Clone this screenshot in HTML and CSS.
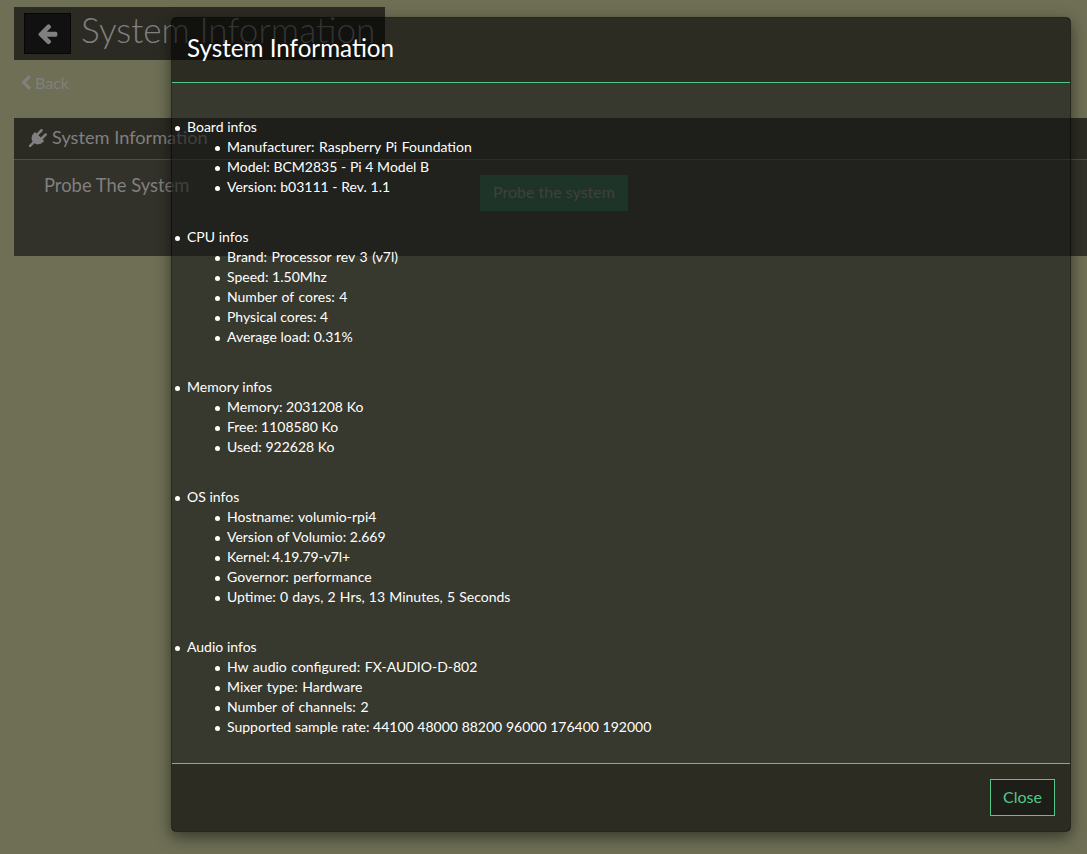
FILE: index.html
```html
<!DOCTYPE html>
<html lang="en">
<head>
<meta charset="utf-8">
<title>System Information</title>
<link rel="stylesheet" href="styles.css">
</head>
<body>
<main class="page">
  <header class="page-header">
    <button class="back-button" aria-label="Back">
      <svg class="arrow-icon" viewBox="0 0 1792 1792"><path fill="currentColor" d="M1664 896v128q0 53-32.5 90.5t-84.5 37.5h-704l293 294q38 36 38 90t-38 90l-75 76q-37 37-90 37-52 0-91-37l-651-652q-37-37-37-90 0-52 37-91l651-650q38-38 91-38 52 0 90 38l75 74q38 38 38 91t-38 91l-293 293h704q52 0 84.500 37.500t32.500 90.500z"/></svg>
    </button>
    <h1 class="page-title">System Information</h1>
  </header>
  <a class="back-link"><svg class="chevron-icon" viewBox="365 0 1081 1792"><path fill="currentColor" d="M1427 301l-531 531 531 531q19 19 19 45t-19 45l-166 166q-19 19-45 19t-45-19l-742-742q-19-19-19-45t19-45l742-742q19-19 45-19t45 19l166 166q19 19 19 45t-19 45z"/></svg><span class="back-text">Back</span></a>
  <section class="panel">
    <h2 class="panel-heading">
      <svg class="plug-icon" viewBox="0 0 1792 1792"><path fill="currentColor" d="M1755 453q37 38 37 90.500t-37 90.500l-401 400 150 150-160 160q-163 163-389.500 186.500t-411.500-100.500l-362 362h-181v-181l362-362q-124-185-100.500-411.500t186.500-389.500l160-160 150 150 400-401q38-37 91-37t90 37 37 90.500-37 90.500l-400 401 234 234 401-400q38-37 91-37t90 37z"/></svg>
      <span class="heading-text">System Information</span>
    </h2>
    <div class="panel-body">
      <span class="setting-label">Probe The System</span>
      <button class="probe-button">Probe the system</button>
    </div>
  </section>
</main>
<div class="modal" role="dialog">
  <div class="modal-header"><h3 class="modal-title">System Information</h3></div>
  <div class="modal-body">
    <ul class="info-list">
      <li>Board infos
        <ul><li class="wide">Manufacturer: Raspberry Pi Foundation</li><li>Model: BCM2835 - Pi 4 Model B</li><li>Version: b03111 - Rev. 1.1</li></ul>
      </li>
      <li>CPU infos
        <ul><li class="wide">Brand: Processor rev 3 (v7l)</li><li>Speed: 1.50Mhz</li><li class="wide">Number of cores: 4</li><li>Physical cores: 4</li><li>Average load: 0.31%</li></ul>
      </li>
      <li>Memory infos
        <ul><li>Memory: 2031208 Ko</li><li>Free: 1108580 Ko</li><li>Used: 922628 Ko</li></ul>
      </li>
      <li>OS infos
        <ul><li class="wide">Hostname: volumio-rpi4</li><li>Version of Volumio: 2.669</li><li class="tight">Kernel: 4.19.79-v7l+</li><li class="wide">Governor: performance</li><li class="uptime">Uptime: 0 days, 2 Hrs, 13 Minutes, 5 Seconds</li></ul>
      </li>
      <li>Audio infos
        <ul><li class="wide">Hw audio configured: FX-AUDIO-D-802</li><li class="wide">Mixer type: Hardware</li><li class="wide">Number of channels: 2</li><li>Supported sample rate: 44100 48000 88200 96000 176400 192000</li></ul>
      </li>
    </ul>
  </div>
  <div class="modal-footer"><button class="close-button">Close</button></div>
</div>
</body>
</html>
```

FILE: styles.css
```css
* { box-sizing: border-box; }
body {
  margin: 0;
  height: 854px;
  overflow: hidden;
  position: relative;
  background: #6e6f55;
  color: #808080;
  font-family: Lato, sans-serif;
}
h1, h2, h3, ul { margin: 0; padding: 0; font-weight: 400; }
button { font-family: inherit; font-size: 16px; padding: 0; border: 0; border-radius: 0; }
.page { padding: 7px 0 0 14px; }
.page-header {
  display: flex;
  width: 371px;
  height: 53px;
  padding: 6px 10px;
  gap: 10px;
  background: #2c2b23;
}
.back-button {
  flex: none;
  display: flex;
  align-items: center;
  justify-content: center;
  width: 47px;
  height: 41px;
  border: 1px solid #070707;
  background: #111;
  color: #808080;
}
.arrow-icon { width: 23px; height: 23px; margin-bottom: 1px; }
.page-title { font-size: 35.2px; font-weight: 300; line-height: 32px; white-space: nowrap; }
.back-link {
  display: flex;
  align-items: center;
  gap: 4px;
  height: 20px;
  margin-top: 13px;
  padding-left: 7px;
  font-size: 16px;
}
.back-text { line-height: 18px; padding-bottom: 1px; }
.chevron-icon { width: 10px; height: 16px; }
.panel { height: 138px; margin-top: 25px; background: #32312a; }
.panel-heading {
  display: flex;
  align-items: center;
  gap: 5px;
  height: 42px;
  padding-left: 15px;
  border-bottom: 1px solid #2a6344;
  background: #2c2b23;
  font-size: 18.2px;
}
.heading-text { padding-bottom: 3px; }
.plug-icon { width: 18px; height: 18px; margin-bottom: 2px; }
.panel-body { display: flex; padding: 15px 0 0 30px; }
.setting-label { width: 436px; font-size: 18.4px; line-height: 20px; }
.probe-button { width: 148px; height: 36px; padding-bottom: 3px; background: #2a6344; color: #808080; }
.modal {
  position: absolute;
  left: 171px;
  top: 17px;
  width: 900px;
  height: 815px;
  display: flex;
  flex-direction: column;
  border: 1px solid rgba(0, 0, 0, .65);
  border-radius: 5px;
  box-shadow: 0 5px 15px rgba(0, 0, 0, .5);
  color: #fff;
}
.modal-header {
  flex: none;
  height: 65px;
  padding: 17px 15px;
  border-bottom: 1px solid #54c688;
  border-radius: 2px 2px 0 0;
  background: rgba(0, 0, 0, .6);
  background-clip: padding-box;
}
.modal-title { font-size: 24.2px; line-height: 26px; }
.modal-body {
  flex: 1;
  min-height: 0;
  padding: 34px 15px 0;
  background: rgba(23, 24, 22, .62);
  font-size: 14px;
  line-height: 20px;
  word-spacing: .1px;
}
.info-list > li { margin-bottom: 30px; }
.info-list ul { padding-left: 40px; }
.info-list, .info-list ul { list-style: none; }
.info-list li::before {
  content: "";
  display: inline-block;
  width: 5px;
  height: 5px;
  margin: 0 7px 0 -12px;
  border-radius: 50%;
  background: #fff;
  vertical-align: 1px;
}
.info-list .wide { word-spacing: 1px; }
.info-list .uptime { word-spacing: .6px; }
.info-list .tight { word-spacing: -1px; letter-spacing: -.1px; }
.modal-footer {
  flex: none;
  display: flex;
  justify-content: flex-end;
  height: 68px;
  padding: 15px;
  border-top: 1px solid #54c688;
  border-radius: 0 0 2px 2px;
  background: rgba(0, 0, 0, .6);
}
.close-button {
  width: 65px;
  height: 37px;
  padding-bottom: 2px;
  border: 1px solid #54c688;
  background: #1e1e19;
  color: #54c688;
}
```
